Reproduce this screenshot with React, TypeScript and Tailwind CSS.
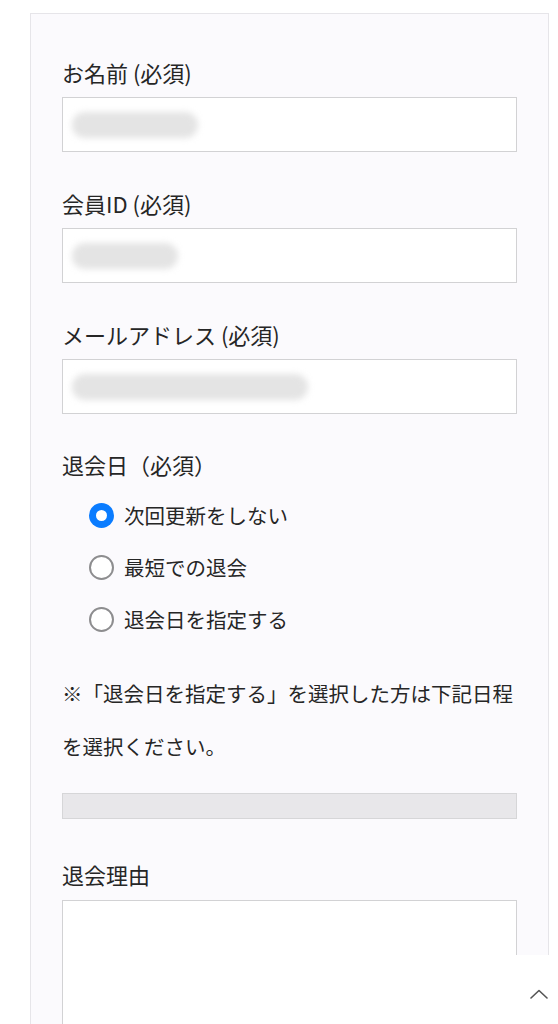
import React from "react";

const font = { fontFamily: '"Noto Sans CJK JP", "Noto Sans", sans-serif' };

function Field({ label, blob }: { label: string; blob: string }) {
  return (
    <div className="flex flex-col">
      <label className="text-[22px] leading-[30px] text-[#262626] mb-[10px]">{label}</label>
      <div className="h-[55px] bg-white border-[1.5px] border-[#d2d2d4] flex items-center pl-[9px]">
        <div className={`h-[26px] rounded-full bg-[#e4e4e4] blur-[3px] ${blob}`} />
      </div>
    </div>
  );
}

function Radio({ label, checked = false }: { label: string; checked?: boolean }) {
  return (
    <div className="h-[52px] flex items-center gap-[10px] pl-[27px]">
      {checked ? (
        <span className="w-[25px] h-[25px] rounded-full bg-[#0a7cff] flex items-center justify-center">
          <span className="w-[11px] h-[11px] rounded-full bg-white" />
        </span>
      ) : (
        <span className="w-[25px] h-[25px] rounded-full bg-white border-2 border-[#8d8d8f]" />
      )}
      <span className="text-[20.5px] text-[#262626]">{label}</span>
    </div>
  );
}

export default function App() {
  return (
    <div className="bg-white min-h-screen pt-[13px]" style={font}>
      <div className="ml-[30px] w-[519px] border border-[#e6e5e9] bg-[#fbfafd] px-[31px] pt-[43px] pb-[60px]">
        <div className="flex flex-col gap-[36px]">
          <Field label="お名前 (必須)" blob="w-[126px]" />
          <Field label="会員ID (必須)" blob="w-[106px]" />
          <Field label="メールアドレス (必須)" blob="w-[236px]" />
        </div>

        <div className="mt-[35px] text-[22px] leading-[30px] text-[#262626]">退会日（必須）</div>
        <div className="mt-[10px] flex flex-col">
          <Radio label="次回更新をしない" checked />
          <Radio label="最短での退会" />
          <Radio label="退会日を指定する" />
        </div>

        <p className="mt-[22px] text-[20.5px] leading-[53px] text-[#262626]">
          ※「退会日を指定する」を選択した方は下記日程を選択ください。
        </p>

        <div className="mt-[20px] h-[26px] bg-[#e8e7ea] border-[1.5px] border-[#d6d6d8]" />

        <div className="mt-[40px] text-[22px] leading-[30px] text-[#262626]">退会理由</div>
        <textarea className="mt-[11px] w-full h-[220px] bg-white border-[1.5px] border-[#d2d2d4] resize-none block" />
      </div>

      <button className="fixed right-0 bottom-0 w-[46px] h-[69px] bg-white flex items-start justify-center pt-[34px] pl-[8px]">
        <svg width="18" height="10" viewBox="0 0 18 10" fill="none">
          <path d="M1 9 L9 1.5 L17 9" stroke="#555" strokeWidth="1.6" strokeLinecap="round" strokeLinejoin="round" />
        </svg>
      </button>
    </div>
  );
}
